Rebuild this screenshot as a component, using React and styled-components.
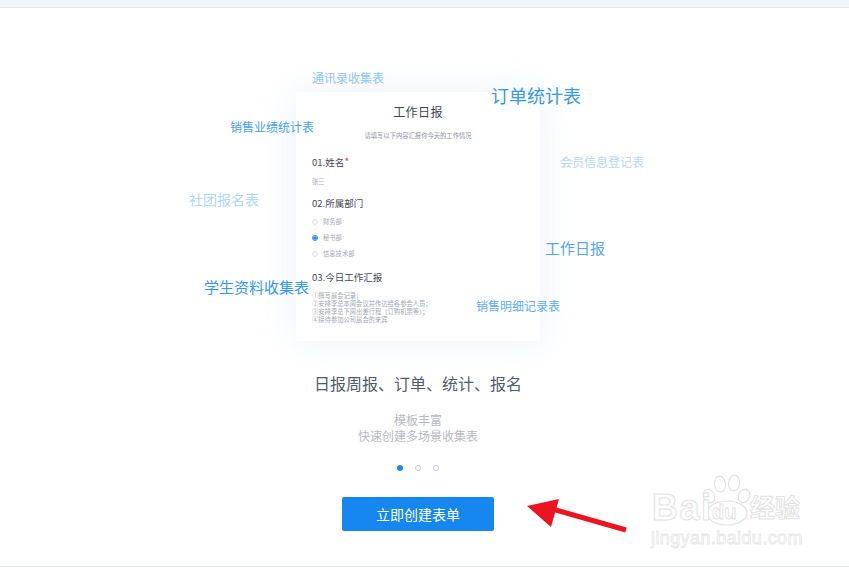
import React from "react";
import styled, { createGlobalStyle } from "styled-components";

const Global = createGlobalStyle`
  html, body { margin: 0; padding: 0; background: #fff; }
  body { font-family: "Noto Sans CJK SC", "Liberation Sans", sans-serif; overflow: hidden; }
`;
const Page = styled.div`
  position: relative; width: 849px; height: 567px; box-sizing: border-box;
  display: flex; flex-direction: column; border-bottom: 1px solid #e2e4ec; overflow: hidden;
`;
const TopBar = styled.div`
  height: 7px; flex: none; background: #f3f4f8; border-bottom: 1px solid #e4e6ec;
`;
const Intro = styled.div`
  width: 836px; display: flex; flex-direction: column; align-items: center;
`;
const Stage = styled.div`
  position: relative; width: 849px; height: 333px; flex: none; padding-top: 84px; box-sizing: border-box;
  display: flex; justify-content: center;
`;
const Card = styled.div`
  width: 244px; height: 249px; margin-left: -13px; box-sizing: border-box; padding: 11px 16px 0;
  background: #fff; box-shadow: 0 0 34px rgba(190, 203, 238, 0.28); color: #4a4f5c;
`;
const CardTitle = styled.div`
  font-size: 12px; line-height: 18px; font-weight: 400; text-align: center; color: #3f4450; letter-spacing: 0.4px;
`;
const CardHint = styled.div`
  font-size: 6.3px; line-height: 10px; text-align: center; color: #8d919c; margin-top: 10px;
`;
const Question = styled.div`
  font-size: 9.5px; line-height: 14px; font-weight: 400; color: #444955; margin-top: ${p => p.$top}px;
`;
const Star = styled.span` color: #ef4a4a; font-size: 11px; line-height: 10px; `;
const Answer = styled.div`
  font-size: 6.3px; line-height: 10px; color: #a9adb6; margin-top: 8px;
`;
const Options = styled.div`
  display: flex; flex-direction: column; gap: 6px; margin-top: 7px;
`;
const Option = styled.div`
  display: flex; align-items: center; gap: 5px; font-size: 6.3px; line-height: 10px; color: #a3a7b1;
`;
const Radio = styled.span`
  width: 6px; height: 6px; border-radius: 50%; box-sizing: border-box; flex: none;
  border: ${p => (p.$on ? "1px solid #2b8df0" : "1px solid #e3e5ea")};
  background: ${p => (p.$on ? "radial-gradient(circle, #2b8df0 0 1.5px, #fff 1.8px)" : "#fff")};
`;
const Report = styled.div`
  font-size: 6.3px; line-height: 8px; color: #a3a7b1; margin-top: 8px; white-space: nowrap;
`;
const Tag = styled.span`
  position: absolute; left: ${p => p.$x}px; top: ${p => p.$y}px; font-size: ${p => p.$size}px;
  line-height: 20px; color: ${p => p.$color}; white-space: nowrap; font-weight: 400;
`;
const Heading = styled.div`
  font-size: 16px; line-height: 24px; color: #555a6a; margin-top: 30px; font-weight: 400;
`;
const Sub = styled.div`
  font-size: 12px; line-height: 16px; color: #b6bac4; text-align: center; margin-top: 17px;
`;
const Dots = styled.div` display: flex; gap: 12px; margin-top: 21px; `;
const Dot = styled.span`
  width: 6px; height: 6px; box-sizing: border-box; border-radius: 50%;
  background: ${p => (p.$on ? "#1587ee" : "#fff")};
  border: 1px solid ${p => (p.$on ? "#1587ee" : "#c4c7cf")};
`;
const Cta = styled.button`
  width: 152px; height: 34px; margin-top: 26px; border: 0; border-radius: 2px; background: #1587ee;
  color: #fff; font: 400 14px "Noto Sans CJK SC", sans-serif; padding: 0;
`;
const ArrowMark = styled.svg`
  position: absolute; left: 520px; top: 490px; width: 115px; height: 50px;
`;
const Watermark = styled.div`
  position: absolute; left: 650px; top: 474px; width: 190px; height: 78px;
`;
const WmBai = styled.span`
  position: absolute; left: 2px; top: 14px; font: 700 36px/40px "Liberation Sans", sans-serif; letter-spacing: 1.5px;
  color: #fff; -webkit-text-stroke: 1px #e2e2e2;
`;
const WmDu = styled.span`
  position: absolute; left: 62px; top: 27px; font: 700 20px/22px "Liberation Sans", sans-serif;
  color: #fff; -webkit-text-stroke: 0.8px #dedede;
`;
const WmCn = styled.span`
  position: absolute; left: 100px; top: 16px; font: 700 25px/32px "Noto Sans CJK SC", sans-serif;
  color: #fff; -webkit-text-stroke: 1px #e2e2e2;
`;
const WmUrl = styled.span`
  position: absolute; left: 1px; top: 52px; font: 400 18px/24px "Liberation Sans", sans-serif;
  color: #fff; -webkit-text-stroke: 0.8px #e6e6e6; letter-spacing: 0.4px; white-space: nowrap;
`;
const WmPaw = styled.svg`
  position: absolute; left: 50px; top: 0; width: 62px; height: 54px;
`;

const tags = [
  ["通讯录收集表", 312, 60, 12, "#8cc6f7"],
  ["订单统计表", 491, 77, 18, "#3497f0"],
  ["销售业绩统计表", 230, 109, 12, "#449ff1"],
  ["会员信息登记表", 560, 144, 12, "#b2d9f9"],
  ["社团报名表", 189, 181, 14, "#aed7f8"],
  ["工作日报", 545, 230, 15, "#52a6ef"],
  ["学生资料收集表", 204, 269, 15, "#3497f0"],
  ["销售明细记录表", 476, 288, 12, "#5dadf2"],
];

export default function App() {
  return (
    <Page>
      <Global />
      <TopBar />
      <Stage>
        <Card>
          <CardTitle>工作日报</CardTitle>
          <CardHint>请填写以下内容汇报你今天的工作情况</CardHint>
          <Question $top={14}>01.姓名<Star>*</Star></Question>
          <Answer>张三</Answer>
          <Question $top={9}>02.所属部门</Question>
          <Options>
            <Option><Radio />财务部</Option>
            <Option><Radio $on />秘书部</Option>
            <Option><Radio />信息技术部</Option>
          </Options>
          <Question $top={11}>03.今日工作汇报</Question>
          <Report>
            ①撰写晨会记录；<br />
            ②安排李总本周会议并传达给各参会人员；<br />
            ③安排李总下周出差行程（订购机票等）；<br />
            ④接待参加公司晨会的来宾
          </Report>
        </Card>
        {tags.map(([text, x, y, size, color]) => (
          <Tag key={text} $x={x} $y={y} $size={size} $color={color}>{text}</Tag>
        ))}
      </Stage>
      <Intro>
        <Heading>日报周报、订单、统计、报名</Heading>
        <Sub>模板丰富<br />快速创建多场景收集表</Sub>
        <Dots><Dot $on /><Dot /><Dot /></Dots>
        <Cta>立即创建表单</Cta>
      </Intro>
      <ArrowMark viewBox="0 0 115 50">
        <path d="M106 40 L29 18" stroke="#ec1421" strokeWidth="5" fill="none" />
        <path d="M7 16 L39 9 L31 37 Z" fill="#ec1421" />
      </ArrowMark>
      <Watermark>
        <WmPaw viewBox="0 0 62 54" fill="#fff" stroke="#e2e2e2" strokeWidth="1.2">
          <ellipse cx="9" cy="22" rx="5.5" ry="7" transform="rotate(-25 9 22)" />
          <ellipse cx="20" cy="10" rx="5.5" ry="8" transform="rotate(-8 20 10)" />
          <ellipse cx="34" cy="9" rx="5.5" ry="8" transform="rotate(8 34 9)" />
          <ellipse cx="44" cy="22" rx="5.5" ry="7" transform="rotate(25 44 22)" />
          <ellipse cx="27" cy="39" rx="20" ry="12" />
        </WmPaw>
        <WmBai>Bai</WmBai>
        <WmDu>du</WmDu>
        <WmCn>经验</WmCn>
        <WmUrl>jingyan.baidu.com</WmUrl>
      </Watermark>
    </Page>
  );
}
